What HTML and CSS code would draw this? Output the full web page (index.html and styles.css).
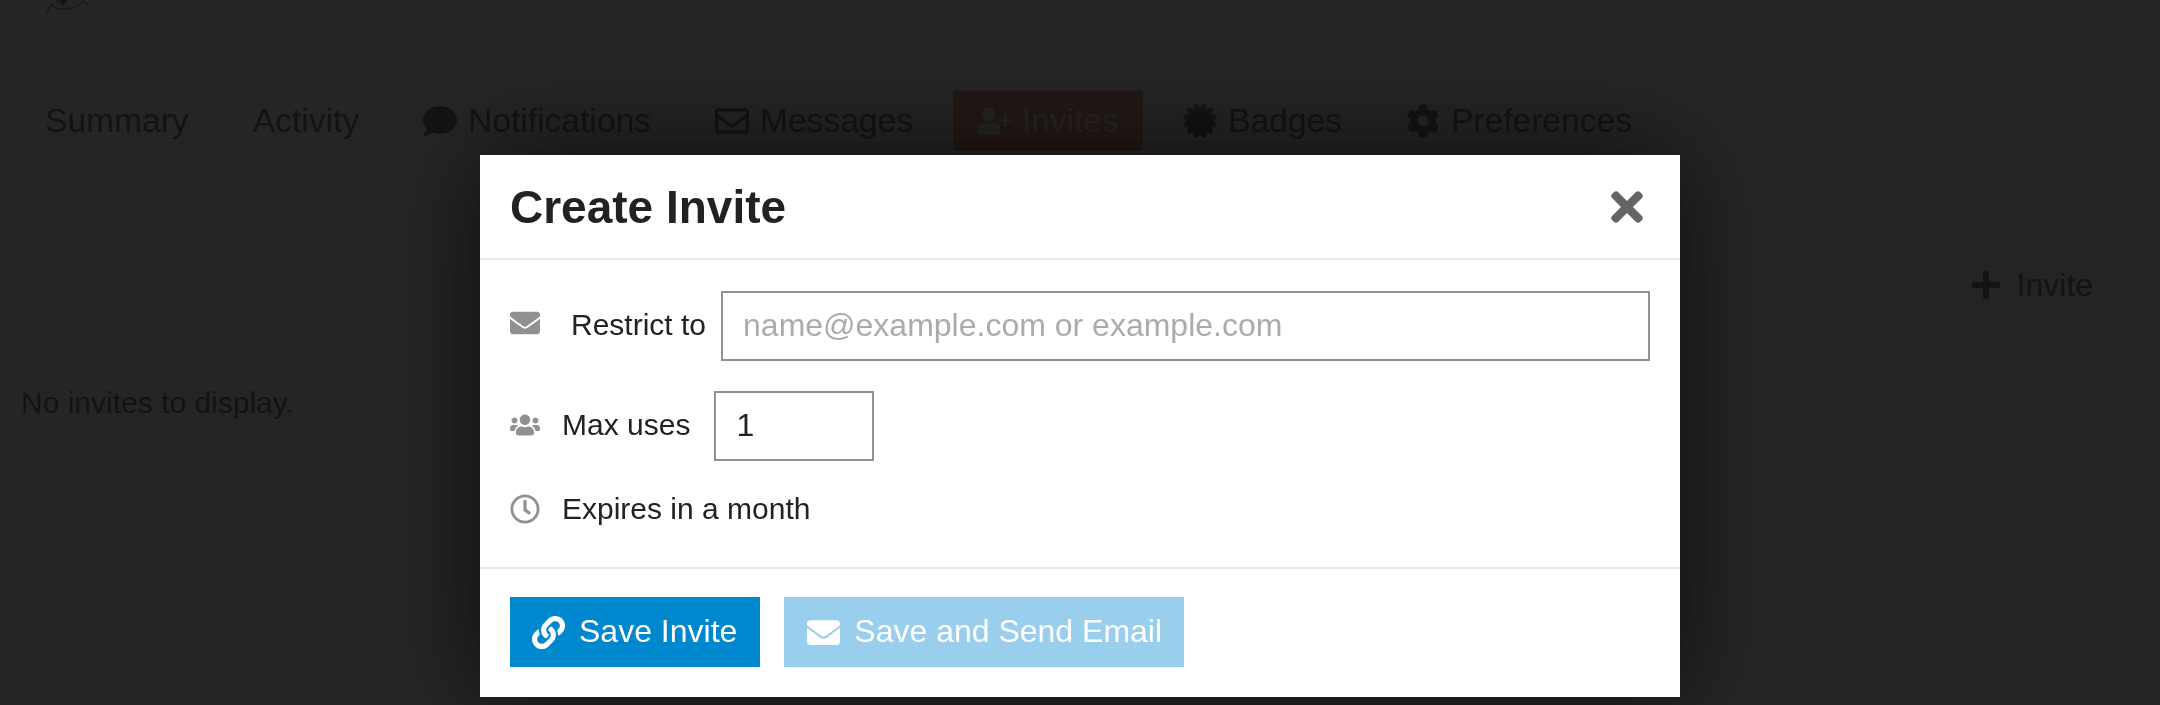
FILE: index.html
```html
<!DOCTYPE html>
<html lang="en">
<head>
  <meta charset="UTF-8" />
  <title>Create Invite</title>
  <link rel="stylesheet" href="styles.css">
</head>
<body>
  <svg class="icon-defs" aria-hidden="true">
    <symbol id="i-envelope" viewBox="0 0 512 512"><path d="M502.3 190.8c3.9-3.1 9.7-.2 9.7 4.7V400c0 26.5-21.5 48-48 48H48c-26.5 0-48-21.5-48-48V195.6c0-5 5.700-7.800 9.700-4.700 22.400 17.400 52.100 39.500 154.100 113.600 21.100 15.400 56.700 47.800 92.200 47.600 35.700.300 72-32.800 92.300-47.600 102-74.100 131.600-96.300 154-113.700zM256 320c23.200.400 56.600-29.200 73.400-41.400 132.700-96.300 142.800-104.700 173.400-128.700 5.800-4.500 9.200-11.500 9.200-18.900v-19c0-26.500-21.500-48-48-48H48C21.500 64 0 85.500 0 112v19c0 7.400 3.400 14.300 9.200 18.900 30.600 23.900 40.700 32.400 173.400 128.700 16.800 12.200 50.200 41.800 73.400 41.400z"/></symbol>
    <symbol id="i-envelope-o" viewBox="0 0 512 512"><path d="M464 64H48C21.490 64 0 85.490 0 112v288c0 26.510 21.490 48 48 48h416c26.510 0 48-21.490 48-48V112c0-26.510-21.490-48-48-48zm0 48v40.805c-22.422 18.259-58.168 46.651-134.587 106.490-16.841 13.247-50.201 45.072-73.413 44.701-23.208.375-56.579-31.459-73.413-44.701C106.180 199.465 70.425 171.067 48 152.805V112h416zM48 400V214.398c22.914 18.251 55.409 43.862 104.938 82.646 21.857 17.205 60.134 55.186 103.062 54.955 42.717.231 80.509-37.199 103.053-54.947 49.528-38.783 82.032-64.401 104.947-82.653V400H48z"/></symbol>
    <symbol id="i-users" viewBox="0 0 640 512"><path d="M96 224c35.300 0 64-28.700 64-64s-28.700-64-64-64-64 28.700-64 64 28.700 64 64 64zm448 0c35.300 0 64-28.700 64-64s-28.700-64-64-64-64 28.700-64 64 28.700 64 64 64zm32 32h-64c-17.600 0-33.500 7.100-45.100 18.600 40.300 22.100 68.900 62 75.100 109.400h66c17.700 0 32-14.300 32-32v-32c0-35.300-28.700-64-64-64zm-256 0c61.900 0 112-50.100 112-112S381.900 32 320 32 208 82.100 208 144s50.100 112 112 112zm76.800 32h-8.300c-20.800 10-43.900 16-68.500 16s-47.600-6-68.500-16h-8.300C179.600 288 128 339.600 128 403.200V432c0 26.500 21.500 48 48 48h288c26.500 0 48-21.500 48-48v-28.800c0-63.600-51.600-115.200-115.200-115.200zm-223.700-13.400C161.500 263.100 145.600 256 128 256H64c-35.300 0-64 28.700-64 64v32c0 17.700 14.300 32 32 32h65.900c6.300-47.400 34.900-87.300 75.200-109.400z"/></symbol>
    <symbol id="i-clock" viewBox="0 0 512 512"><path d="M256 8C119 8 8 119 8 256s111 248 248 248 248-111 248-248S393 8 256 8zm0 448c-110.500 0-200-89.500-200-200S145.500 56 256 56s200 89.500 200 200-89.500 200-200 200zm61.800-104.400l-84.900-61.700c-3.100-2.300-4.900-5.900-4.900-9.700V116c0-6.600 5.400-12 12-12h32c6.600 0 12 5.400 12 12v141.700l66.800 48.600c5.400 3.900 6.500 11.400 2.600 16.800L334.600 349c-3.900 5.300-11.400 6.500-16.800 2.600z"/></symbol>
    <symbol id="i-link" viewBox="0 0 512 512"><path d="M326.612 185.391c59.747 59.809 58.927 155.698.36 214.590-.11.12-.24.25-.36.37l-67.200 67.200c-59.270 59.270-155.699 59.262-214.960 0-59.270-59.260-59.270-155.700 0-214.960l37.106-37.106c9.840-9.840 26.786-3.300 27.294 10.606.648 17.722 3.826 35.527 9.690 52.721 1.986 5.822.567 12.262-3.783 16.612l-13.087 13.087c-28.026 28.026-28.905 73.660-1.155 101.960 28.024 28.579 74.086 28.749 102.325.51l67.200-67.190c28.191-28.191 28.073-73.757 0-101.830-3.701-3.694-7.429-6.564-10.341-8.569a16.037 16.037 0 0 1-6.947-12.606c-.396-10.567 3.348-21.456 11.698-29.806l21.054-21.055c5.521-5.521 14.182-6.199 20.584-1.731a152.482 152.482 0 0 1 20.522 17.197zM467.547 44.449c-59.261-59.262-155.690-59.270-214.960 0l-67.200 67.200c-.12.12-.25.25-.36.37-58.566 58.892-59.387 154.781.36 214.590a152.454 152.454 0 0 0 20.521 17.196c6.402 4.468 15.064 3.789 20.584-1.731l21.054-21.055c8.350-8.350 12.094-19.239 11.698-29.806a16.037 16.037 0 0 0-6.947-12.606c-2.912-2.005-6.640-4.875-10.341-8.569-28.073-28.073-28.191-73.639 0-101.830l67.200-67.190c28.239-28.239 74.300-28.069 102.325.51 27.750 28.300 26.872 73.934-1.155 101.960l-13.087 13.087c-4.350 4.350-5.769 10.790-3.783 16.612 5.864 17.194 9.042 34.999 9.690 52.721.509 13.906 17.454 20.446 27.294 10.606l37.106-37.106c59.271-59.259 59.271-155.699.001-214.959z"/></symbol>
    <symbol id="i-times" viewBox="0 0 352 512"><path d="M242.720 256l100.070-100.070c12.280-12.280 12.280-32.190 0-44.480l-22.240-22.240c-12.280-12.280-32.190-12.280-44.480 0L176 189.280 75.930 89.210c-12.280-12.280-32.190-12.280-44.480 0L9.210 111.450c-12.280 12.280-12.280 32.190 0 44.480L109.280 256 9.210 356.070c-12.280 12.280-12.280 32.190 0 44.480l22.240 22.240c12.280 12.280 32.200 12.280 44.480 0L176 322.720l100.070 100.070c12.280 12.280 32.200 12.280 44.480 0l22.240-22.240c12.280-12.280 12.280-32.190 0-44.480L242.720 256z"/></symbol>
    <symbol id="i-plus" viewBox="0 0 448 512"><path d="M416 208H272V64c0-17.670-14.330-32-32-32h-32c-17.670 0-32 14.330-32 32v144H32c-17.670 0-32 14.330-32 32v32c0 17.670 14.330 32 32 32h144v144c0 17.670 14.330 32 32 32h32c17.670 0 32-14.330 32-32V304h144c17.670 0 32-14.330 32-32v-32c0-17.670-14.330-32-32-32z"/></symbol>
    <symbol id="i-comment" viewBox="0 0 512 512"><path d="M256 32C114.600 32 0 125.100 0 240c0 49.600 21.400 95 57 130.700C44.500 421.100 2.700 466 2.200 466.500c-2.200 2.300-2.800 5.700-1.500 8.700S4.800 480 8 480c66.300 0 116-31.800 140.600-51.400 32.700 12.300 69 19.400 107.400 19.400 141.400 0 256-93.100 256-208S397.400 32 256 32z"/></symbol>
    <symbol id="i-user-plus" viewBox="0 0 640 512"><path d="M624 208h-64v-64c0-8.800-7.200-16-16-16h-32c-8.800 0-16 7.200-16 16v64h-64c-8.800 0-16 7.200-16 16v32c0 8.800 7.200 16 16 16h64v64c0 8.800 7.200 16 16 16h32c8.800 0 16-7.200 16-16v-64h64c8.800 0 16-7.200 16-16v-32c0-8.800-7.200-16-16-16zm-400 48c70.700 0 128-57.300 128-128S294.700 0 224 0 96 57.300 96 128s57.300 128 128 128zm89.600 32h-16.700c-22.200 10.200-46.900 16-72.900 16s-50.600-5.800-72.900-16h-16.700C60.200 288 0 348.200 0 422.400V464c0 26.500 21.500 48 48 48h352c26.500 0 48-21.500 48-48v-41.600c0-74.200-60.200-134.400-134.400-134.400z"/></symbol>
    <symbol id="i-certificate" viewBox="0 0 512 512"><path d="M458.622 255.920l45.985-45.005c13.708-12.977 7.316-36.039-10.664-40.339l-62.650-15.990 17.661-62.015c4.991-17.838-11.829-34.663-29.661-29.671l-61.994 17.667-15.984-62.671C337.085.197 313.765-6.276 300.990 7.228L256 53.570 211.011 7.229c-12.630-13.351-36.047-7.234-40.325 10.668l-15.984 62.671-61.995-17.667C74.870 57.907 58.056 74.738 63.046 92.572l17.661 62.015-62.650 15.990C.069 174.878-6.310 197.944 7.392 210.915l45.985 45.005-45.985 45.004c-13.708 12.977-7.316 36.039 10.664 40.339l62.650 15.990-17.661 62.015c-4.991 17.838 11.829 34.663 29.661 29.671l61.994-17.667 15.984 62.671c4.439 18.575 27.696 24.018 40.325 10.668L256 458.610l44.989 46.001c12.500 13.488 35.987 7.486 40.325-10.668l15.984-62.671 61.994 17.667c17.836 4.994 34.651-11.837 29.661-29.671l-17.661-62.015 62.650-15.990c17.987-4.302 24.366-27.367 10.664-40.339l-45.984-45.004z"/></symbol>
    <symbol id="i-cog" viewBox="0 0 512 512"><path d="M487.400 315.700l-42.600-24.600c4.300-23.200 4.300-47 0-70.200l42.600-24.600c4.900-2.800 7.100-8.600 5.500-14-11.100-35.600-30-67.800-54.700-94.600-3.800-4.100-10-5.100-14.800-2.300L380.800 110c-17.900-15.400-38.500-27.300-60.800-35.100V25.800c0-5.600-3.900-10.500-9.400-11.700-36.700-8.200-74.300-7.800-109.200 0-5.500 1.200-9.400 6.100-9.400 11.700V75c-22.200 7.900-42.800 19.800-60.800 35.100L88.700 85.500c-4.900-2.800-11-1.900-14.800 2.300-24.700 26.700-43.600 58.900-54.700 94.600-1.700 5.400.6 11.200 5.500 14L67.300 221c-4.300 23.200-4.300 47 0 70.200l-42.600 24.600c-4.900 2.800-7.100 8.600-5.500 14 11.100 35.600 30 67.800 54.700 94.600 3.800 4.100 10 5.100 14.800 2.300l42.600-24.600c17.900 15.400 38.500 27.300 60.800 35.100v49.200c0 5.600 3.900 10.500 9.400 11.700 36.700 8.200 74.300 7.800 109.200 0 5.500-1.200 9.400-6.100 9.400-11.700v-49.200c22.200-7.900 42.800-19.800 60.800-35.100l42.600 24.600c4.900 2.800 11 1.900 14.800-2.300 24.700-26.700 43.600-58.900 54.700-94.600 1.500-5.500-.7-11.300-5.600-14.100zM256 336c-44.100 0-80-35.900-80-80s35.900-80 80-80 80 35.900 80 80-35.900 80-80 80z"/></symbol>
  </svg>

  <header class="site-header">
    <svg class="logo" viewBox="0 0 50 14" fill="none" stroke="currentColor" stroke-width="1.200">
      <path d="M1 13 L6 4 M6 4 C9 9 16 10 22 9 C28 8 33 6 37 1 M37 1 L43 6 M10 0 L16 5 L21 0"/>
      <path d="M14 0 L17 5 L20 0 Z" fill="currentColor"/>
    </svg>
  </header>

  <nav class="tabs">
    <a class="tab" href="#">Summary</a>
    <a class="tab" href="#">Activity</a>
    <a class="tab" href="#"><svg class="tab-icon"><use href="#i-comment"/></svg>Notifications</a>
    <a class="tab" href="#"><svg class="tab-icon"><use href="#i-envelope-o"/></svg>Messages</a>
    <a class="tab active" href="#"><svg class="tab-icon"><use href="#i-user-plus"/></svg>Invites</a>
    <a class="tab" href="#"><svg class="tab-icon"><use href="#i-certificate"/></svg>Badges</a>
    <a class="tab" href="#"><svg class="tab-icon"><use href="#i-cog"/></svg>Preferences</a>
  </nav>

  <main class="invites">
    <div class="invites-actions">
      <button class="btn-invite" type="button"><svg class="plus-icon"><use href="#i-plus"/></svg>Invite</button>
    </div>
    <p class="no-invites">No invites to display.</p>
  </main>

  <div class="backdrop">
    <div class="modal">
      <div class="modal-header">
        <h3>Create Invite</h3>
        <button class="modal-close" type="button" aria-label="Close"><svg><use href="#i-times"/></svg></button>
      </div>
      <div class="modal-body">
        <div class="row">
          <svg class="row-icon mail-icon"><use href="#i-envelope"/></svg>
          <label class="row-label restrict-label" for="restrict">Restrict to</label>
          <input class="text-input restrict-input" id="restrict" type="text" placeholder="name@example.com or example.com">
        </div>
        <div class="row">
          <svg class="row-icon users-icon"><use href="#i-users"/></svg>
          <label class="row-label" for="max-uses">Max uses</label>
          <input class="text-input uses-input" id="max-uses" type="text" value="1">
        </div>
        <div class="row row-expires">
          <svg class="row-icon"><use href="#i-clock"/></svg>
          <span class="row-label">Expires in a month</span>
        </div>
      </div>
      <div class="modal-footer">
        <button class="btn btn-save" type="button"><svg><use href="#i-link"/></svg>Save Invite</button>
        <button class="btn btn-send" type="button"><svg><use href="#i-envelope"/></svg>Save and Send Email</button>
      </div>
    </div>
  </div>
</body>
</html>
```

FILE: styles.css
```css
body {
  margin: 0;
  height: 705px;
  overflow: hidden;
  background: #fff;
  color: #222;
  font-family: "Liberation Sans", Arial, sans-serif;
  font-size: 30px;
}

.icon-defs {
  display: none;
}

svg {
  fill: currentColor;
}

.site-header {
  height: 26px;
  padding-left: 46px;
  border-bottom: 1px solid #e9e9e9;
}

.logo {
  display: block;
  width: 50px;
  height: 14px;
  fill: none;
}

.tabs {
  display: flex;
  gap: 16px;
  margin: 64px 0 0 21px;
}

.tab {
  display: flex;
  align-items: center;
  height: 60px;
  padding: 0 24px;
  color: #222;
  font-size: 33.6px;
  text-decoration: none;
}

.tab.active {
  background: #e45735;
  color: #fff;
}

.tab-icon {
  width: 34px;
  height: 34px;
  margin-right: 11px;
}

.invites {
  padding: 0 43px 0 21px;
}

.invites-actions {
  display: flex;
  justify-content: flex-end;
  margin-top: 99px;
}

.btn-invite {
  display: flex;
  align-items: center;
  height: 70px;
  padding: 0 24px;
  border: none;
  background: #e9e9e9;
  color: #222;
  font-family: inherit;
  font-size: 32px;
}

.plus-icon {
  width: 28px;
  height: 32px;
  margin-right: 17px;
}

.no-invites {
  margin: 67px 0 0;
  font-size: 30px;
  line-height: 32px;
}

.backdrop {
  position: fixed;
  inset: 0;
  display: flex;
  justify-content: center;
  align-items: flex-start;
  padding-top: 155px;
  background: rgba(18, 18, 18, 0.92);
}

.modal {
  width: 1200px;
  background: #fff;
  box-shadow: 0 0 100px rgba(0, 0, 0, 0.6);
}

.modal-header {
  display: flex;
  align-items: center;
  justify-content: space-between;
  height: 103px;
  padding: 0 37px 0 30px;
  border-bottom: 2px solid #e9e9e9;
}

.modal-header h3 {
  margin: 0;
  font-size: 46px;
  font-weight: bold;
}

.modal-close {
  display: flex;
  padding: 0;
  border: none;
  background: none;
  color: #646464;
}

.modal-close svg {
  width: 32px;
  height: 46px;
}

.modal-body {
  display: flex;
  flex-direction: column;
  gap: 30px;
  padding: 31px 30px 40px;
}

.row {
  display: flex;
  align-items: center;
}

.row-expires {
  height: 36px;
}

.row-icon {
  flex: none;
  width: 30px;
  height: 30px;
  margin-right: 22px;
  color: #919191;
}

.mail-icon {
  margin-bottom: 6px;
}

.users-icon {
  margin-bottom: 3px;
}

.row-label {
  flex: none;
  margin-bottom: 2px;
  font-size: 30px;
  white-space: nowrap;
}

.row-expires .row-label {
  margin-bottom: 0;
}

.restrict-label {
  margin-left: 9px;
  margin-right: 15px;
}

.text-input {
  flex: none;
  box-sizing: border-box;
  height: 70px;
  padding: 0 20px 2px;
  border: 2px solid #919191;
  border-radius: 0;
  color: #222;
  font-family: inherit;
  font-size: 32px;
  outline: none;
}

.text-input::placeholder {
  color: #ababab;
}

.restrict-input {
  width: 929px;
}

.uses-input {
  width: 160px;
  margin-left: 24px;
}

.modal-footer {
  display: flex;
  gap: 24px;
  padding: 28px 30px 30px;
  border-top: 2px solid #e9e9e9;
}

.btn {
  display: flex;
  align-items: center;
  height: 70px;
  padding: 0 23px 2px 22px;
  border: none;
  color: #fff;
  font-family: inherit;
  font-size: 32px;
}

.btn svg {
  width: 33px;
  height: 33px;
  margin-top: 2px;
  margin-right: 14px;
}

.btn-save {
  background: #0088cf;
}

.btn-send {
  padding-left: 23px;
  padding-right: 22px;
  background: #99cfec;
}
```
